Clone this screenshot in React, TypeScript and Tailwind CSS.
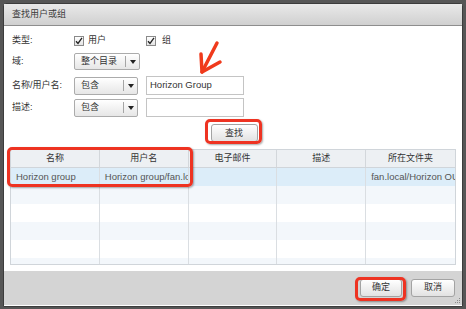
const cjk = "font-['Liberation_Sans','Noto_Sans_CJK_SC',sans-serif]";

const Check = () => (
	<span className="flex h-[10px] w-[10px] items-center justify-center border border-[#8a8a8a] bg-linear-to-b from-white to-[#e4e4e4]">
		<svg width="8" height="8" viewBox="0 0 8 8">
			<path d="M1 4.2 L3 6.4 L7 0.8" fill="none" stroke="#222" strokeWidth="1.3" />
		</svg>
	</span>
);

const Select = ({ label, w, h }: { label: string; w: string; h: string }) => (
	<div
		className={`flex ${w} ${h} items-center rounded-[2px] border border-[#ababab] bg-linear-to-b from-white to-[#e6e6e6] text-[#333]`}
	>
		<span className="flex-1 pl-[6px] text-[9px] leading-none">{label}</span>
		<span className="h-[11px] border-l border-[#a5a5a5]" />
		<span className="flex w-[13px] justify-center">
			<svg width="6" height="4" viewBox="0 0 6 4">
				<path d="M0 0 H6 L3 4 Z" fill="#222" />
			</svg>
		</span>
	</div>
);

const Btn = ({ label, w }: { label: string; w: string }) => (
	<button
		className={`${w} h-[18px] rounded-[3px] border border-[#a3a3a3] bg-linear-to-b from-white to-[#e2e2e2] text-[9px] leading-none text-[#333]`}
	>
		{label}
	</button>
);

const columns = ["名称", "用户名", "电子邮件", "描述", "所在文件夹"];
const firstRow = ["Horizon group", "Horizon group/fan.local", "", "", "fan.local/Horizon OU"];

export default function App() {
	const rows = [0, 1, 2, 3, 4, 5];

	return (
		<div className={`relative h-[309px] w-[466px] overflow-hidden bg-[#565656] pt-[3px] pl-[3px] ${cjk}`}>
			<div className="flex h-[304px] w-[460px] flex-col rounded-t-[3px] border border-[#3c3c3c] bg-white">
				{/* title */}
				<div className="flex h-[22px] items-center border-b border-[#8e8e8e] bg-linear-to-b from-[#e9e9e9] to-[#d0d0d0] pl-[8px] text-[9px] text-[#3a3a3a]">
					查找用户或组
				</div>

				{/* body */}
				<div className="flex h-[245px] flex-col pt-[8px] text-[9px] text-[#333]">
					<div className="flex h-[14px] items-center pl-[8px]">
						<span className="w-[62px]">类型:</span>
						<span className="flex w-[72px] items-center gap-[4px]">
							<Check />
							用户
						</span>
						<span className="flex items-center gap-[6px]">
							<Check />
							组
						</span>
					</div>
					<div className="mt-[5px] flex items-center pl-[8px]">
						<span className="w-[62px]">域:</span>
						<Select label="整个目录" w="w-[66px]" h="h-[17px]" />
					</div>
					<div className="mt-[6px] flex items-center pl-[8px]">
						<span className="w-[62px]">名称/用户名:</span>
						<Select label="包含" w="w-[64px]" h="h-[18px]" />
						<div className="ml-[8px] flex h-[19px] w-[98px] items-center border border-[#c4c4c4] pl-[3px] font-['Liberation_Sans'] text-[9.5px] text-[#333]">
							Horizon Group
						</div>
					</div>
					<div className="mt-[3px] flex items-center pl-[8px]">
						<span className="w-[62px]">描述:</span>
						<Select label="包含" w="w-[64px]" h="h-[18px]" />
						<div className="ml-[8px] h-[19px] w-[98px] border border-[#c4c4c4]" />
					</div>

					<div className="mt-[7px] flex justify-center pl-[2px]">
						<Btn label="查找" w="w-[47px]" />
					</div>

					{/* table */}
					<div className="mx-[6px] mt-[7px] h-[116px] overflow-hidden border border-[#d0d5da]">
						<div className="grid h-[18px] grid-cols-5 border-b border-[#d0d5da] bg-[#edf0f3]">
							{columns.map((c, i) => (
								<div
									key={c}
									className={`flex items-center justify-center text-[9px] text-[#333] ${i < 4 ? "border-r border-[#d3d7db]" : ""}`}
								>
									{c}
								</div>
							))}
						</div>
						{rows.map((r) => (
							<div
								key={r}
								className={`grid h-[18px] grid-cols-5 ${r === 0 ? "bg-[#dcedf9]" : r % 2 === 1 ? "bg-[#f3f7fb]" : "bg-white"}`}
							>
								{columns.map((c, i) => (
									<div
										key={c}
										className={`flex items-center overflow-hidden whitespace-nowrap pl-[5px] font-['Liberation_Sans'] text-[9.5px] text-[#555] ${i < 4 ? "border-r border-[#dadee2]" : ""}`}
									>
										{r === 0 ? firstRow[i] : ""}
									</div>
								))}
							</div>
						))}
					</div>
				</div>

				{/* footer */}
				<div className="relative flex h-[34px] items-center justify-end gap-[9px] bg-[#d4d4d4] pr-[7px] pb-[1px]">
					<Btn label="确定" w="w-[42px]" />
					<Btn label="取消" w="w-[44px]" />
					<svg className="absolute right-[1px] bottom-[1px]" width="8" height="8" viewBox="0 0 8 8">
						<g fill="#8a8a8a">
							<rect x="6" y="2" width="1" height="1" />
							<rect x="4" y="4" width="1" height="1" />
							<rect x="6" y="4" width="1" height="1" />
							<rect x="2" y="6" width="1" height="1" />
							<rect x="4" y="6" width="1" height="1" />
							<rect x="6" y="6" width="1" height="1" />
						</g>
					</svg>
				</div>
			</div>

			{/* annotations */}
			<div className="absolute top-[119px] left-[205px] h-[25px] w-[57px] rounded-[5px] border-[3px] border-[#ee3322] shadow-[1px_1px_2px_rgba(0,0,0,0.35)]" />
			<div className="absolute top-[147px] left-[7px] h-[40px] w-[186px] rounded-[5px] border-[3px] border-[#ee3322] shadow-[1px_1px_2px_rgba(0,0,0,0.35)]" />
			<div className="absolute top-[277px] left-[355px] h-[24px] w-[51px] rounded-[5px] border-[3px] border-[#ee3322] shadow-[1px_1px_2px_rgba(0,0,0,0.35)]" />
			<svg className="absolute top-[38px] left-[196px]" width="30" height="40" viewBox="0 0 30 40">
				<g fill="none" stroke="#f03a1c" strokeWidth="3.5" strokeLinecap="round" strokeLinejoin="round">
					<path d="M21 5 L6 34" />
					<path d="M5 16 L6 34 L24 24" />
				</g>
			</svg>
		</div>
	);
}
